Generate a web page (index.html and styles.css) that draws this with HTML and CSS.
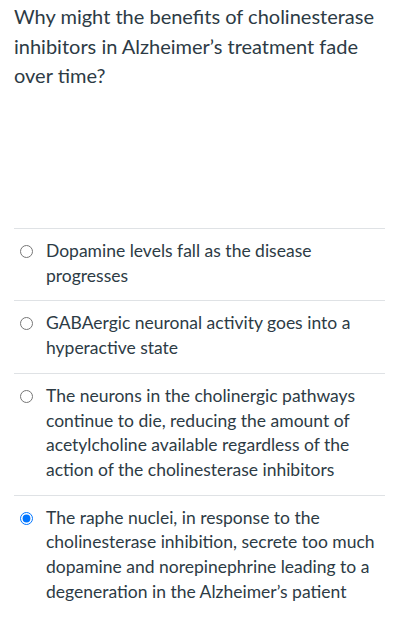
FILE: index.html
```html
<!DOCTYPE html>
<html lang="en">
<head>
<meta charset="utf-8">
<title>Question</title>
<link rel="stylesheet" href="styles.css">
</head>
<body>
<div class="quiz">
  <div class="question">Why might the benefits of cholinesterase inhibitors in Alzheimer’s treatment fade over time?</div>
  <div class="answers">
    <label class="answer">
      <input type="radio" name="q1" class="radio">
      <span class="answer-text">Dopamine levels fall as the disease progresses</span>
    </label>
    <label class="answer">
      <input type="radio" name="q1" class="radio">
      <span class="answer-text">GABAergic neuronal activity goes into a hyperactive state</span>
    </label>
    <label class="answer">
      <input type="radio" name="q1" class="radio">
      <span class="answer-text">The neurons in the cholinergic pathways continue to die, reducing the amount of acetylcholine available regardless of the action of the cholinesterase inhibitors</span>
    </label>
    <label class="answer">
      <input type="radio" name="q1" class="radio" checked>
      <span class="answer-text">The raphe nuclei, in response to the cholinesterase inhibition, secrete too much dopamine and norepinephrine leading to a degeneration in the Alzheimer’s patient</span>
    </label>
  </div>
</div>
</body>
</html>
```

FILE: styles.css
```css
html, body {
  margin: 0;
  padding: 0;
  background: #ffffff;
}

body {
  font-family: Lato, "Noto Sans", sans-serif;
  color: #2d3b45;
}

.quiz {
  padding: 2px 22px 0 14px;
}

.question {
  font-size: 20px;
  line-height: 29.5px;
  height: 226px;
}

.answers {
  display: flex;
  flex-direction: column;
}

.answer {
  display: flex;
  align-items: flex-start;
  gap: 13px;
  border-top: 1px solid #dfe2e5;
  padding: 10px 0 12px 6px;
  font-size: 17.5px;
  line-height: 24.7px;
}

.radio {
  flex: none;
  width: 13px;
  height: 13px;
  margin: 6px 0 0 0;
}

.answer-text {
  flex: 1;
}
```
